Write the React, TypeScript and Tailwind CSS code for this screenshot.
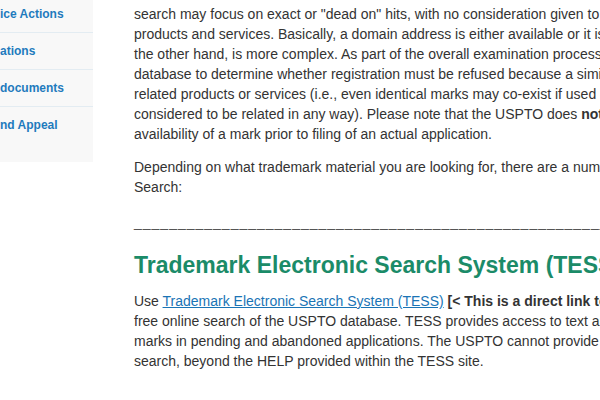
const sideItems = ["ice Actions", "ations", "documents", "nd Appeal"];

function Line({ children }: { children: React.ReactNode }) {
  return <div className="whitespace-nowrap">{children}</div>;
}

export default function App() {
  return (
    <div
      className="flex h-[400px] w-[600px] overflow-hidden bg-white text-[14px] leading-[20px] text-[#333]"
      style={{ fontFamily: '"Liberation Sans", Arial, sans-serif' }}
    >
      <aside className="mt-[-4px] w-[93px] shrink-0 self-start bg-[#f8f8f8] pb-[18px]">
        {sideItems.map((item, i) => (
          <div
            key={item}
            className={`h-[37px] whitespace-nowrap pt-[11px] text-[12px] font-bold leading-[15px] text-[#1f7bbd] ${
              i < sideItems.length - 1 ? "border-b border-[#e3ecf2]" : ""
            }`}
          >
            {item}
          </div>
        ))}
      </aside>

      <main className="ml-[41px] min-w-0 flex-1">
        <div className="mt-[-16px]">
          <Line>
            Please note that a trademark search is not the same as a domain
            name search. A domain name
          </Line>
          <Line>
            search may focus on exact or "dead on" hits, with no consideration
            given to similar marks or related
          </Line>
          <Line>
            products and services. Basically, a domain address is either
            available or it is not. A trademark search, on
          </Line>
          <Line>
            the other hand, is more complex. As part of the overall examination
            process, the USPTO conducts a search of its
          </Line>
          <Line>
            database to determine whether registration must be refused because
            a similar mark exists for
          </Line>
          <Line>
            related products or services (i.e., even identical marks may
            co-exist if used on products or services not
          </Line>
          <Line>
            considered to be related in any way). Please note that the USPTO
            does <b>not</b> conduct a search for the
          </Line>
          <Line>
            availability of a mark prior to filing of an actual application.
          </Line>
        </div>

        <div className="mt-[13px]">
          <Line>
            Depending on what trademark material you are looking for, there are
            a number of ways to conduct a Trademark
          </Line>
          <Line>Search:</Line>
        </div>

        <div className="mt-[15px] whitespace-nowrap tracking-[1px] text-[#555]">
          {"_".repeat(70)}
        </div>

        <h2 className="mt-[19px] whitespace-nowrap text-[23px] font-bold leading-[28px] text-[#1b8b68]">
          Trademark Electronic Search System (TESS)
        </h2>

        <div className="mt-[12px]">
          <Line>
            Use{" "}
            <a href="#" className="text-[#1a74b5] underline">
              Trademark Electronic Search System (TESS)
            </a>{" "}
            <b>[&lt; This is a direct link to TESS]</b> to conduct a
          </Line>
          <Line>
            free online search of the USPTO database. TESS provides access to
            text and images of registered marks and
          </Line>
          <Line>
            marks in pending and abandoned applications. The USPTO cannot
            provide guidance on how to conduct a
          </Line>
          <Line>search, beyond the HELP provided within the TESS site.</Line>
        </div>
      </main>
    </div>
  );
}
